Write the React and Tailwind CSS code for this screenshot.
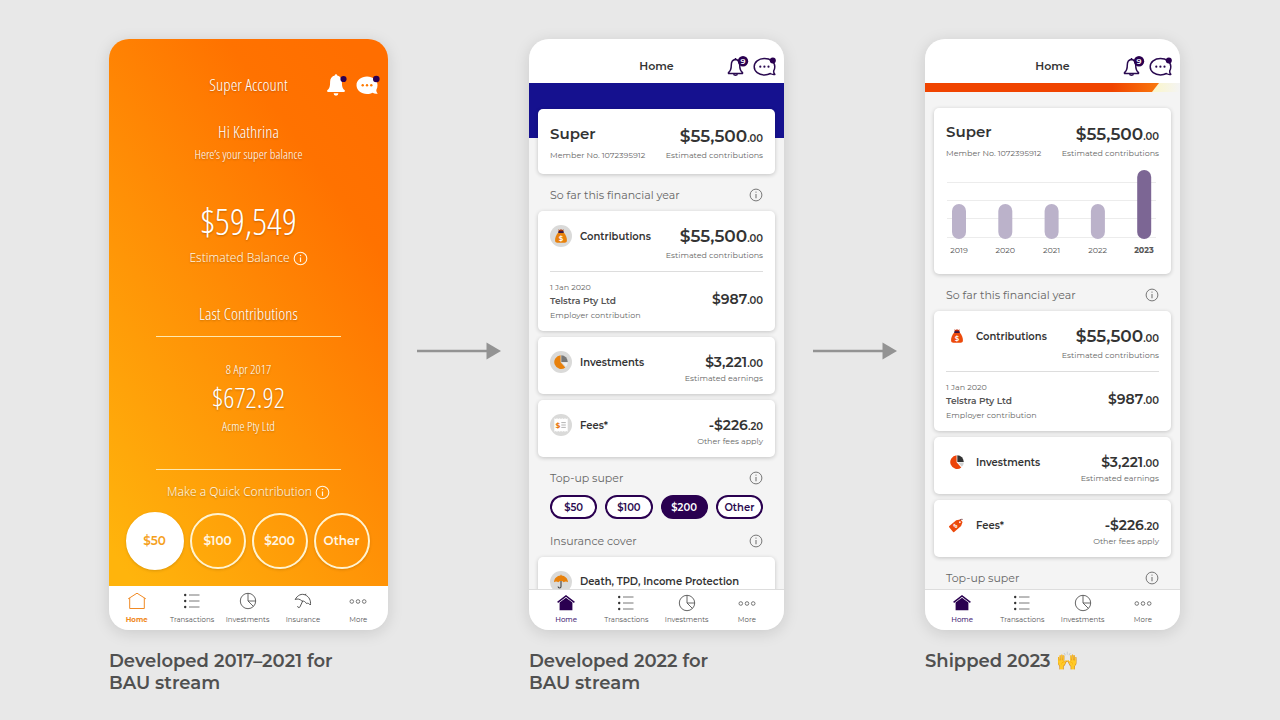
const CONDENSED = "font-['Open_Sans_Condensed_Light','Roboto_Condensed',sans-serif] font-light text-white";

/* ---------- icons ---------- */

function InfoIcon({ className }) {
  return (
    <svg viewBox="0 0 14 14" fill="none" stroke="currentColor" className={className} aria-hidden="true">
      <circle cx="7" cy="7" r="5.9" strokeWidth="1" />
      <path d="M7 6v4.2" strokeWidth="1.1" />
      <circle cx="7" cy="4.1" r="0.7" fill="currentColor" stroke="none" />
    </svg>
  );
}

function SolidBell() {
  return (
    <svg viewBox="0 0 22 24" className="h-6 w-[22px]" aria-hidden="true">
      <path
        d="M10 1.2c.8 0 1.2.6 1.2 1.3 3 .7 4.7 3.100 4.700 6.200 0 4.600.6 6.800 2.600 8.300.7.600.5 2-.6 2H2.100c-1.100 0-1.300-1.400-.6-2 2-1.500 2.600-3.700 2.600-8.300 0-3.100 1.700-5.500 4.700-6.200 0-.7.4-1.300 1.200-1.300z"
        fill="#fff"
      />
      <path d="M7.600 20.300h4.800a2.400 2.400 0 0 1-4.800 0z" fill="#fff" />
      <circle cx="17.500" cy="6" r="3.100" fill="#2d0050" />
    </svg>
  );
}

function SolidChat() {
  return (
    <svg viewBox="0 0 25 22" className="h-[22px] w-[25px]" aria-hidden="true">
      <path
        d="M11 2.600C5.200 2.600.5 6.200.5 11.300S5.200 20 11 20c2.200 0 4-.4 5.600-1.200 1.600.9 3.500 1.200 5.200.7-1.100-.9-1.500-2.200-1.500-3.600.8-1.300 1.200-2.800 1.200-4.600 0-5.100-4.700-8.700-10.500-8.700z"
        fill="#fff"
      />
      <circle cx="6.700" cy="11.300" r="1.200" fill="#ff7a00" />
      <circle cx="11" cy="11.300" r="1.200" fill="#ff7a00" />
      <circle cx="15.300" cy="11.300" r="1.200" fill="#ff7a00" />
      <circle cx="20.300" cy="5" r="3.300" fill="#2d0050" />
    </svg>
  );
}

function OutlineBell() {
  return (
    <svg viewBox="0 0 22 22" className="h-[22px] w-[22px]" aria-hidden="true">
      <g fill="none" stroke="#2a0a50" strokeWidth="1.500" strokeLinejoin="round">
        <path d="M8.500 3.600C5.700 3.900 4.300 6 4.300 9c0 3.800-.5 5.700-2.600 7.400-.6.500-.3 1.200.4 1.200h12.800c.7 0 1-.7.4-1.200-2.100-1.700-2.600-3.600-2.600-7.400 0-3-1.400-5.100-4.200-5.400z" />
        <path d="M8.500 3.600V2M6.500 18.300c.5 1.300 3.500 1.300 4 0" />
      </g>
      <circle cx="16" cy="5.200" r="5.200" fill="#2a0050" />
      <text x="16" y="8" textAnchor="middle" fontSize="8" fontWeight="600" fill="#fff" fontFamily="Montserrat, sans-serif">
        9
      </text>
    </svg>
  );
}

function OutlineChat() {
  return (
    <svg viewBox="0 0 24 22" className="h-[22px] w-6" aria-hidden="true">
      <path
        d="M11.500 2.500C5.700 2.500 1.200 5.900 1.200 10.700s4.500 8.200 10.300 8.200c2.300 0 4.200-.5 5.900-1.400 1.200.8 2.800 1.200 4.400.9-1-1-1.200-2.300-1.100-3.500.7-1.200 1.100-2.600 1.100-4.200 0-4.800-4.500-8.200-10.300-8.200z"
        fill="none"
        stroke="#2a0a50"
        strokeWidth="1.500"
        strokeLinejoin="round"
      />
      <circle cx="7.300" cy="10.700" r="1.100" fill="#2a0a50" />
      <circle cx="11.400" cy="10.700" r="1.100" fill="#2a0a50" />
      <circle cx="15.500" cy="10.700" r="1.100" fill="#2a0a50" />
      <circle cx="19.800" cy="4.500" r="3" fill="#2a0050" />
    </svg>
  );
}

function HomeOutline() {
  return (
    <svg viewBox="0 0 20 18" className="h-[18px] w-5" fill="none" stroke="#f08a24" strokeWidth="1" aria-hidden="true">
      <path d="M1.200 6.800 10 1.200l8.800 5.600M2.700 6v10.500h14.600V6" />
    </svg>
  );
}

function HomeSolid() {
  return (
    <svg viewBox="0 0 20 18" className="h-[18px] w-5" aria-hidden="true">
      <path d="M1.600 8.300 10 1.900l8.400 6.400" fill="none" stroke="#2a0050" strokeWidth="1.500" />
      <path d="M3.600 8.500 10 3.700l6.400 4.800v7.700H3.600z" fill="#2a0050" />
    </svg>
  );
}

function ListIcon() {
  return (
    <svg viewBox="0 0 20 18" className="h-[18px] w-5" aria-hidden="true">
      <path d="M7 3h10.500M7 9h10.500M7 15h10.500" stroke="#777" strokeWidth="1" />
      <circle cx="3.200" cy="3" r="1.200" fill="#333" />
      <circle cx="3.200" cy="9" r="1.200" fill="#333" />
      <circle cx="3.200" cy="15" r="1.200" fill="#333" />
    </svg>
  );
}

function PieOutline() {
  return (
    <svg viewBox="0 0 20 18" className="h-[18px] w-5" fill="none" stroke="#555" strokeWidth="0.900" aria-hidden="true">
      <circle cx="10" cy="9" r="7.700" />
      <path d="M10 1.300V9l5.400 5.400M10 9h7.700" />
    </svg>
  );
}

function UmbrellaOutline() {
  return (
    <svg viewBox="0 0 20 18" className="h-[18px] w-5" fill="none" stroke="#444" strokeWidth="0.900" strokeLinejoin="round" aria-hidden="true">
      <path d="M2.200 7.500C4.400 3.200 8.600 1.200 12.400 3c3.800 1.800 5.700 5.600 5 10-1.200-1.600-2.600-2-4.100-1.600-1-1.700-2.400-2.600-4.400-2.400C7 7 4.600 6.500 2.200 7.500z" />
      <path d="M9.700 9 7 14.800c-.6 1.400-2.800.8-2.200-.8M12.400 3l.5-1.200" />
    </svg>
  );
}

function MoreIcon() {
  return (
    <svg viewBox="0 0 20 18" className="h-[18px] w-5" fill="none" stroke="#666" strokeWidth="0.900" aria-hidden="true">
      <circle cx="3.800" cy="9.500" r="1.800" />
      <circle cx="10" cy="9.500" r="1.800" />
      <circle cx="16.200" cy="9.500" r="1.800" />
    </svg>
  );
}

function Disc({ on }) {
  return on ? <circle cx="11" cy="11" r="11" fill="#dadad9" /> : null;
}

function MoneyBag({ disc }) {
  const body = disc ? "#e8810c" : "#ec4a0c";
  return (
    <svg viewBox="0 0 22 22" className="h-[22px] w-[22px]" aria-hidden="true">
      <Disc on={disc} />
      <path d="M8.400 7.300h5.200c2.300 2.500 3.600 6 3.300 8.500-.2 1.400-.9 1.900-2.200 1.900H7.300c-1.300 0-2-.5-2.200-1.900-.3-2.500 1-6 3.300-8.500z" fill={body} />
      <path d="M8.400 4.300 9.600 5l1.400-.8 1.400.8 1.200-.7-.5 2.900H8.900z" fill={disc ? "#a3330a" : "#c42a0a"} />
      <rect x="8.300" y="6.300" width="5.400" height="1.600" fill="#24104a" />
      <text x="11" y="15.500" textAnchor="middle" fontSize="7" fontWeight="600" fill="#fff" fontFamily="Montserrat, sans-serif">
        $
      </text>
    </svg>
  );
}

function PieSolid({ disc }) {
  return (
    <svg viewBox="0 0 22 22" className="h-[22px] w-[22px]" aria-hidden="true">
      <Disc on={disc} />
      <path d="M10.600 4.300v7l4.700 5.100A6.800 6.800 0 1 1 10.600 4.300z" fill={disc ? "#e8810c" : "#ec4409"} />
      <path d="M11.300 4.300a6.600 6.600 0 0 1 6.500 6.600h-6.500z" fill={disc ? "#777" : "#333"} />
      <path d="M12 11.600h5.800a6.600 6.600 0 0 1-1.900 4.200z" fill={disc ? "#f0f0f0" : "#d2d2d2"} />
    </svg>
  );
}

function Invoice() {
  return (
    <svg viewBox="0 0 22 22" className="h-[22px] w-[22px]" aria-hidden="true">
      <Disc on />
      <path d="M4.300 4.300 5.600 5l1.400-.7 1.300.7 1.300-.7 1.400.7 1.300-.7 1.400.7 1.300-.7 1.300.7 1.400-.7v13.400l-1.400-.7-1.300.7-1.300-.7-1.400.7-1.300-.7-1.400.7-1.300-.7-1.300.7-1.400-.7-1.300.7z" fill="#fff" />
      <text x="8" y="13.700" textAnchor="middle" fontSize="7.500" fontWeight="700" fill="#e8760c" fontFamily="Montserrat, sans-serif">
        $
      </text>
      <path d="M11.300 8.600h4.500M11.300 11h4.500M11.300 13.400h4.500" stroke="#aaa" strokeWidth="0.900" />
    </svg>
  );
}

function PriceTag() {
  return (
    <svg viewBox="0 0 22 22" className="h-[22px] w-[22px]" aria-hidden="true">
      <g transform="rotate(-40 10.500 11)">
        <path d="M4.300 7.200h9l3.700 2.100v3.400l-3.700 2.100h-9c-.6 0-.9-.3-.9-.9V8.100c0-.6.3-.9.9-.9z" fill="#ec4a0c" />
        <circle cx="14.900" cy="11" r="0.900" fill="#fff" />
        <text x="9" y="13" textAnchor="middle" fontSize="5.500" fontWeight="600" fill="#fff" fontFamily="Montserrat, sans-serif">
          $
        </text>
      </g>
      <path d="M13.800 5.900c.9-.6 1.900-.7 2.900-.5" fill="none" stroke="#5a1a20" strokeWidth="0.700" />
    </svg>
  );
}

function UmbrellaSolid() {
  return (
    <svg viewBox="0 0 22 22" className="h-[22px] w-[22px]" aria-hidden="true">
      <Disc on />
      <path d="M11 9v6.500c0 1.900-2.900 1.900-2.900 0" fill="none" stroke="#444" strokeWidth="1.100" />
      <path d="M4 11.200C4.200 7 7.200 4.600 10.500 4.400V3.700h1v.7c3.300.2 6.300 2.600 6.500 6.800-1.200-1.100-3.100-1.100-4.300 0-.8-.9-1.700-1.200-2.700-1.200s-1.900.3-2.700 1.200c-1.200-1.100-3.100-1.100-4.300 0z" fill="#e8810c" />
    </svg>
  );
}

function Arrow() {
  return (
    <div className="flex justify-center pt-8">
      <svg viewBox="0 0 84 18" className="h-[18px] w-[84px]" aria-hidden="true">
        <path d="M0 9h72" stroke="#939393" strokeWidth="2.500" />
        <path d="M69.500.5 84 9l-14.500 8.500z" fill="#939393" />
      </svg>
    </div>
  );
}

/* ---------- shared parts ---------- */

function TabBar({ items, className, itemGap }) {
  return (
    <nav className={`flex bg-white text-[7px] leading-[10px] text-[#555] ${className}`}>
      {items.map(({ label, icon, active }) => (
        <a key={label} href="#" className={`flex flex-1 flex-col items-center ${itemGap} ${active || ""}`}>
          {icon}
          {label}
        </a>
      ))}
    </nav>
  );
}

function Amount({ whole, cents, large }) {
  return (
    <p className="flex h-[22px] items-baseline justify-end leading-[22px] font-semibold text-[#333]">
      <span className={large ? "text-[17px]" : "text-[14px]"}>{whole}</span>
      <span className="text-[10px]">.{cents}</span>
    </p>
  );
}

function Section({ title }) {
  return (
    <div className="flex items-center justify-between pt-[13px] pr-3 pb-2 pl-3 text-[#666]">
      <h3 className="text-[11px] leading-4">{title}</h3>
      <button aria-label={`About ${title}`} className="text-[#777]">
        <InfoIcon className="h-[14px] w-[14px]" />
      </button>
    </div>
  );
}

function Card({ children, className = "" }) {
  return <section className={`rounded-[5px] bg-white shadow-[0_1px_4px_rgba(0,0,0,0.2)] ${className}`}>{children}</section>;
}

function SummaryRow({ icon, title, whole, cents, note, large }) {
  return (
    <div className="flex justify-between">
      <div className="flex h-[22px] items-center gap-2">
        {icon}
        <h4 className="text-[10px] font-semibold text-[#333]">{title}</h4>
      </div>
      <div className="text-right">
        <Amount whole={whole} cents={cents} large={large} />
        <p className={`text-[8px] leading-[10px] text-[#666] ${large ? "pt-[3px]" : ""}`}>{note}</p>
      </div>
    </div>
  );
}

function AccountHead() {
  return (
    <div className="flex justify-between">
      <div>
        <h2 className="text-[15px] leading-[22px] font-semibold text-[#333]">Super</h2>
        <p className="pt-[5px] text-[8px] leading-[10px] text-[#666]">Member No. 1072395912</p>
      </div>
      <div className="pt-[2px] text-right">
        <Amount whole="$55,500" cents="00" large />
        <p className="pt-[3px] text-[8px] leading-[10px] text-[#666]">Estimated contributions</p>
      </div>
    </div>
  );
}

function YearCards({ icons }) {
  return (
    <div className="flex flex-col gap-[6px]">
      <Card className="px-3 pt-[14px] pb-[9px]">
        <SummaryRow icon={icons[0]} title="Contributions" whole="$55,500" cents="00" note="Estimated contributions" large />
        <div className="mt-[11px] flex items-start justify-between border-t border-[#ddd] pt-2">
          <div className="text-[8px] leading-[14px] text-[#666]">
            <p>1 Jan 2020</p>
            <p className="text-[9px] font-semibold text-[#555]">Telstra Pty Ltd</p>
            <p>Employer contribution</p>
          </div>
          <div className="pt-2">
            <Amount whole="$987" cents="00" />
          </div>
        </div>
      </Card>
      <Card className="px-3 pt-[14px] pb-[11px]">
        <SummaryRow icon={icons[1]} title="Investments" whole="$3,221" cents="00" note="Estimated earnings" />
      </Card>
      <Card className="px-3 pt-[14px] pb-[11px]">
        <SummaryRow icon={icons[2]} title="Fees*" whole="-$226" cents="20" note="Other fees apply" />
      </Card>
    </div>
  );
}

const PURPLE = "text-[#4a2a78] font-medium";
const newTabs = [
  { label: "Home", icon: <HomeSolid />, active: PURPLE },
  { label: "Transactions", icon: <ListIcon /> },
  { label: "Investments", icon: <PieOutline /> },
  { label: "More", icon: <MoreIcon /> },
];

const oldTabs = [
  { label: "Home", icon: <HomeOutline />, active: "text-[#f08a24] font-bold" },
  { label: "Transactions", icon: <ListIcon /> },
  { label: "Investments", icon: <PieOutline /> },
  { label: "Insurance", icon: <UmbrellaOutline /> },
  { label: "More", icon: <MoreIcon /> },
];

const PHONE = "flex h-[591px] flex-col overflow-hidden rounded-[20px] shadow-[0_3px_16px_rgba(0,0,0,0.13)]";

function NewHeader() {
  return (
    <header className="grid h-11 shrink-0 grid-cols-[1fr_auto_1fr] items-end bg-white px-[7px] pb-[5px]">
      <span />
      <h2 className="pb-[3px] text-[11px] leading-[18px] font-semibold text-[#333]">Home</h2>
      <div className="flex justify-end gap-1">
        <button aria-label="Notifications">
          <OutlineBell />
        </button>
        <button aria-label="Messages">
          <OutlineChat />
        </button>
      </div>
    </header>
  );
}

/* ---------- phones ---------- */

function QuickCircle({ children, selected }) {
  return (
    <button
      className={`flex items-center justify-center rounded-full border-2 text-[12px] font-semibold shadow-[0_1px_3px_rgba(0,0,0,0.15)] ${
        selected
          ? "h-[58px] w-[58px] border-white bg-white text-[#f5a01c] text-shadow-none"
          : "h-14 w-14 border-[#fff3d0] text-[#fff6e4]"
      }`}
    >
      {children}
    </button>
  );
}

function OldPhone() {
  return (
    <div className={PHONE}>
      <div className="flex flex-1 flex-col items-center bg-[linear-gradient(234deg,#ff6e00_6%,#ff7200_24%,#ff9006_56%,#ffb40c_96%)] text-[#fff6e4] text-shadow-[0_1px_2px_rgba(0,0,0,0.25)]">
        <header className={`grid w-full grid-cols-[1fr_auto_1fr] items-center px-[7px] pt-[34px] ${CONDENSED}`}>
          <span />
          <h2 className="text-[17px] leading-6">Super Account</h2>
          <div className="flex items-center justify-end gap-2">
            <button aria-label="Notifications">
              <SolidBell />
            </button>
            <button aria-label="Messages">
              <SolidChat />
            </button>
          </div>
        </header>
        <div className={`flex w-full flex-col items-center ${CONDENSED}`}>
          <p className="pt-[23px] text-[17px] leading-6">Hi Kathrina</p>
          <p className="pt-[2px] text-[13px] leading-4">Here’s your super balance</p>
          <p className="pt-[39px] text-[37px] leading-10">$59,549</p>
        </div>
        <p className="flex items-center gap-[3px] pt-[9px] font-['Noto_Sans',sans-serif] text-[12px] leading-4 font-light">
          Estimated Balance <InfoIcon className="h-[15px] w-[15px]" />
        </p>
        <div className={`mt-9 flex w-[185px] flex-col items-center ${CONDENSED}`}>
          <h3 className="text-[17px] leading-6">Last Contributions</h3>
          <div className="mt-[10px] flex h-[134px] w-full flex-col items-center border-y border-[#ffe9b0] pt-6">
            <p className="text-[13px] leading-4">8 Apr 2017</p>
            <p className="pt-1 text-[28px] leading-8">$672.92</p>
            <p className="pt-[5px] text-[13px] leading-4">Acme Pty Ltd</p>
          </div>
        </div>
        <p className="flex items-center gap-[3px] pt-[14px] font-['Noto_Sans',sans-serif] text-[12px] leading-4 font-light">
          Make a Quick Contribution <InfoIcon className="h-[15px] w-[15px]" />
        </p>
        <div className="flex items-center gap-[6px] pt-3 pr-[2px]">
          <QuickCircle selected>$50</QuickCircle>
          <QuickCircle>$100</QuickCircle>
          <QuickCircle>$200</QuickCircle>
          <QuickCircle>Other</QuickCircle>
        </div>
      </div>
      <TabBar items={oldTabs} itemGap="gap-[5px]" className="h-11 pt-[6px] pr-[2px]" />
    </div>
  );
}

function Pill({ children, selected }) {
  return (
    <button
      className={`h-6 flex-1 basis-0 rounded-full border-2 border-[#2a0050] text-[10px] font-semibold ${
        selected ? "bg-[#2a0050] text-white" : "bg-white text-[#2a0a50]"
      }`}
    >
      {children}
    </button>
  );
}

function NavyPhone() {
  return (
    <div className={PHONE}>
      <NewHeader />
      <main className="min-h-0 flex-1 overflow-hidden bg-[linear-gradient(#15118f_55px,#f4f4f4_55px)] px-[9px] pt-[26px]">
        <Card className="px-3 pt-[14px] pb-[14px]">
          <AccountHead />
        </Card>
        <Section title="So far this financial year" />
        <YearCards icons={[<MoneyBag disc />, <PieSolid disc />, <Invoice />]} />
        <Section title="Top-up super" />
        <div className="flex gap-2 px-3 py-px">
          <Pill>$50</Pill>
          <Pill>$100</Pill>
          <Pill selected>$200</Pill>
          <Pill>Other</Pill>
        </div>
        <Section title="Insurance cover" />
        <Card className="flex items-start gap-2 px-3 py-[14px]">
          <UmbrellaSolid />
          <h4 className="text-[10px] leading-[22px] font-semibold text-[#333]">Death, TPD, Income Protection</h4>
        </Card>
      </main>
      <TabBar items={newTabs} itemGap="gap-[3px]" className="h-[41px] border-t border-[#ddd] px-[7px] pt-1" />
    </div>
  );
}

const years = [
  { year: "2019", height: 35 },
  { year: "2020", height: 35 },
  { year: "2021", height: 35 },
  { year: "2022", height: 35 },
  { year: "2023", height: 69, current: true },
];

function YearChart() {
  return (
    <div className="pt-[11px] pr-1 pb-[19px] pl-[2px]">
      <svg viewBox="0 0 231 70" className="block w-full" role="img" aria-label="Balance by year">
        {[14, 32, 50, 69].map((y) => (
          <path key={y} d={`M11 ${y - 0.5}H220`} stroke="#ececec" strokeWidth="1" />
        ))}
        {years.map((d, i) => (
          <rect key={d.year} x={16 + i * 46.3} y={70 - d.height} width="14" height={d.height} rx="7" fill={d.current ? "#7c6694" : "#bbb2ca"} />
        ))}
      </svg>
      <ul className="flex pt-[6px] text-center text-[8px] leading-[10px] text-[#555]">
        {years.map((d) => (
          <li key={d.year} className={d.current ? "flex-1 font-bold" : "flex-1"}>
            {d.year}
          </li>
        ))}
      </ul>
    </div>
  );
}

function OrangePhone() {
  return (
    <div className={PHONE}>
      <NewHeader />
      <main className="min-h-0 flex-1 overflow-hidden bg-[#f4f4f4]">
        <svg viewBox="0 0 255 9" preserveAspectRatio="none" className="block h-[9px] w-full" aria-hidden="true">
          <defs>
            <linearGradient id="stripe">
              <stop offset="0.800" stopColor="#f04400" />
              <stop offset="1" stopColor="#f9780e" />
            </linearGradient>
            <linearGradient id="glow">
              <stop offset="0" stopColor="#fbf6c8" />
              <stop offset="1" stopColor="#f4f4f4" />
            </linearGradient>
          </defs>
          <path d="M234 0h21v9h-28z" fill="url(#glow)" />
          <path d="M0 0h234l-7 9H0z" fill="url(#stripe)" />
        </svg>
        <div className="px-[9px] pt-4">
          <Card>
            <div className="px-3 pt-[13px]">
              <AccountHead />
            </div>
            <YearChart />
          </Card>
          <Section title="So far this financial year" />
          <YearCards icons={[<MoneyBag />, <PieSolid />, <PriceTag />]} />
          <Section title="Top-up super" />
        </div>
      </main>
      <TabBar items={newTabs} itemGap="gap-[3px]" className="h-[41px] border-t border-[#ddd] px-[7px] pt-1" />
    </div>
  );
}

function Caption({ children }) {
  return <p className="self-start pt-5 text-[18px] leading-[22px] font-semibold text-[#505050]">{children}</p>;
}

export default function App() {
  return (
    <div className="min-h-screen bg-[#e8e8e8] pt-[39px] pl-[9px] font-['Montserrat',sans-serif]">
      <div className="mx-auto grid max-w-[1071px] grid-cols-[279px_1fr_255px_1fr_255px] items-center">
        <OldPhone />
        <Arrow />
        <NavyPhone />
        <Arrow />
        <OrangePhone />
        <Caption>
          Developed 2017–2021 for
          <br />
          BAU stream
        </Caption>
        <span />
        <Caption>
          Developed 2022 for
          <br />
          BAU stream
        </Caption>
        <span />
        <Caption>Shipped 2023 🙌</Caption>
      </div>
    </div>
  );
}
